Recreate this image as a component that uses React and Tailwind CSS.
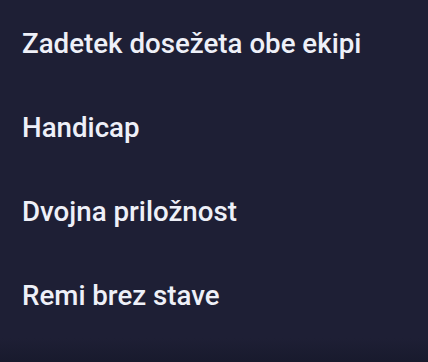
import React from 'react';

const markets = [
  'Zadetek dosežeta obe ekipi',
  'Handicap',
  'Dvojna priložnost',
  'Remi brez stave',
];

export default function App() {
  return (
    <div className="w-[428px] h-[362px] bg-[#1e1f35] flex flex-col overflow-hidden" style={{ fontFamily: 'Roboto, "Liberation Sans", sans-serif' }}>
      <ul className="flex flex-col pt-[2px]">
        {markets.map((m) => (
          <li key={m} className="h-[84px] flex items-center px-[22px] text-[27.7px] font-medium text-[#eef0f8]">
            {m}
          </li>
        ))}
      </ul>
      <div className="flex-1 bg-gradient-to-b from-[#1e1f35] to-[#181a2d]" />
    </div>
  );
}
